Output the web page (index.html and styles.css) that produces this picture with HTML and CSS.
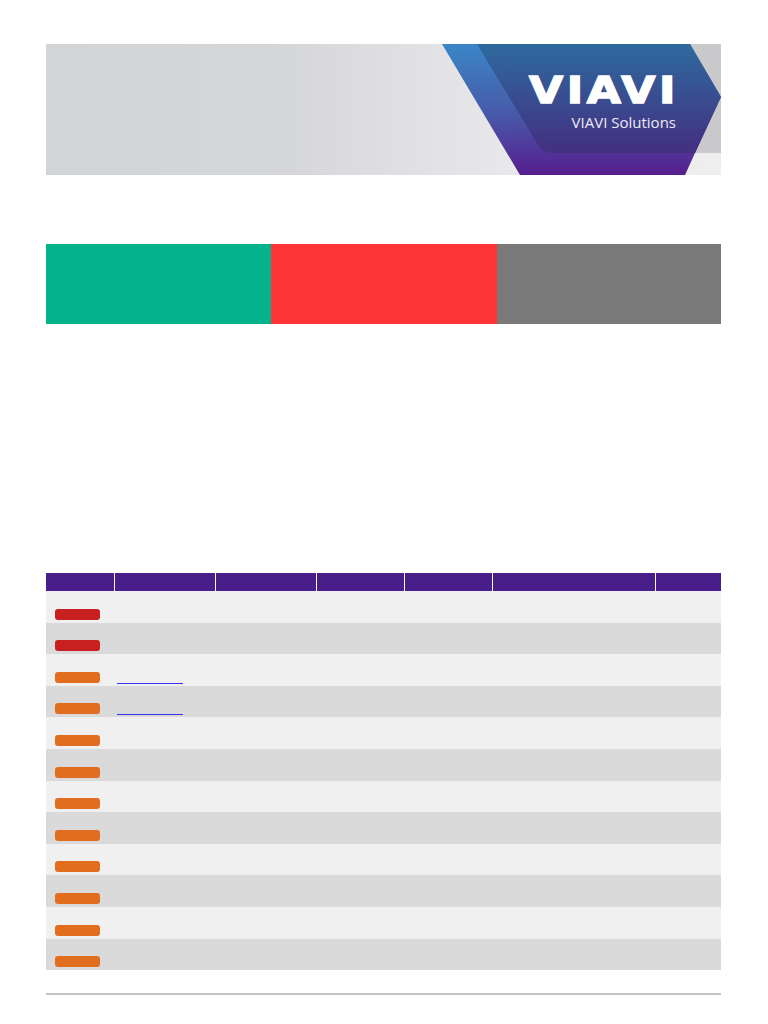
FILE: index.html
```html
<!DOCTYPE html>
<html lang="en">
<head>
<meta charset="utf-8">
<title>VIAVI Report</title>
<link rel="stylesheet" href="styles.css">
</head>
<body>
<div class="page">
  <header class="banner">
    <svg class="banner-art" viewBox="0 0 675 131" width="675" height="131" xmlns="http://www.w3.org/2000/svg">
      <defs>
        <linearGradient id="outerGrad" x1="0" y1="0" x2="0" y2="1">
          <stop offset="0" stop-color="#3a86c6"/>
          <stop offset="0.55" stop-color="#4858a8"/>
          <stop offset="1" stop-color="#561d8e"/>
        </linearGradient>
        <linearGradient id="innerGrad" x1="0" y1="0" x2="0" y2="1">
          <stop offset="0" stop-color="#2e6a9e"/>
          <stop offset="1" stop-color="#432f80"/>
        </linearGradient>
      </defs>
      <rect x="640" y="0" width="35" height="109" fill="#c9c9cb"/>
      <polygon points="396,0 644,0 675,53 649,109 639,131 474,131" fill="url(#outerGrad)"/>
      <path d="M431,0 H644 L675,53 L649,109 H507 Q497,109 492,101 Z" fill="url(#innerGrad)"/>
      <text class="logo-word" x="483" y="59" textLength="150" lengthAdjust="spacingAndGlyphs">VIAVI</text>
      <text class="logo-sub" x="630" y="84" text-anchor="end">VIAVI Solutions</text>
    </svg>
  </header>

  <div class="status-bar">
    <div class="seg seg-pass"></div>
    <div class="seg seg-fail"></div>
    <div class="seg seg-other"></div>
  </div>

  <div class="results">
    <div class="row head">
      <div class="cell c1"></div>
      <div class="cell c2"></div>
      <div class="cell c3"></div>
      <div class="cell c4"></div>
      <div class="cell c5"></div>
      <div class="cell c6"></div>
      <div class="cell c7"></div>
    </div>
    <div class="row odd"><div class="cell c1"><span class="badge red"></span></div><div class="cell c2"></div></div>
    <div class="row even"><div class="cell c1"><span class="badge red"></span></div><div class="cell c2"></div></div>
    <div class="row odd"><div class="cell c1"><span class="badge orange"></span></div><div class="cell c2"><a class="link" href="#"></a></div></div>
    <div class="row even"><div class="cell c1"><span class="badge orange"></span></div><div class="cell c2"><a class="link" href="#"></a></div></div>
    <div class="row odd"><div class="cell c1"><span class="badge orange"></span></div><div class="cell c2"></div></div>
    <div class="row even"><div class="cell c1"><span class="badge orange"></span></div><div class="cell c2"></div></div>
    <div class="row odd"><div class="cell c1"><span class="badge orange"></span></div><div class="cell c2"></div></div>
    <div class="row even"><div class="cell c1"><span class="badge orange"></span></div><div class="cell c2"></div></div>
    <div class="row odd"><div class="cell c1"><span class="badge orange"></span></div><div class="cell c2"></div></div>
    <div class="row even"><div class="cell c1"><span class="badge orange"></span></div><div class="cell c2"></div></div>
    <div class="row odd"><div class="cell c1"><span class="badge orange"></span></div><div class="cell c2"></div></div>
    <div class="row even"><div class="cell c1"><span class="badge orange"></span></div><div class="cell c2"></div></div>
  </div>

  <footer class="footer-line"></footer>
</div>
</body>
</html>
```

FILE: styles.css
```css
* {
  box-sizing: border-box;
}

html, body {
  margin: 0;
  padding: 0;
  background: #ffffff;
  font-family: "Liberation Sans", Arial, sans-serif;
}

.page {
  width: 675px;
  margin-left: 46px;
  padding-top: 44px;
}

.banner {
  height: 131px;
  background: linear-gradient(to right, #d3d4d6 0%, #d5d6d8 35%, #e9e9eb 70%, #eeeeef 100%);
}

.banner-art {
  display: block;
}

.logo-word {
  font-family: "DejaVu Sans", sans-serif;
  font-weight: bold;
  font-size: 37px;
  letter-spacing: 3px;
  fill: #ffffff;
  stroke: #ffffff;
  stroke-width: 1.4px;
}

.logo-sub {
  font-family: "Open Sans", "Noto Sans", sans-serif;
  font-size: 15px;
  fill: #eceaf4;
}

.status-bar {
  display: flex;
  height: 80px;
  margin-top: 69px;
}

.seg {
  height: 100%;
}

.seg-pass {
  width: 225px;
  background: #04b28c;
}

.seg-fail {
  width: 226px;
  background: #fe3537;
}

.seg-other {
  width: 224px;
  background: #797979;
}

.results {
  margin-top: 249px;
}

.row {
  display: flex;
  height: 31.6px;
}

.row.head {
  height: 18px;
  gap: 1px;
  background: #ffffff;
}

.row.head .cell {
  background: #4a1e8a;
}

.row.odd {
  background: #f0f0f0;
}

.row.even {
  background: #dadada;
}

.cell {
  height: 100%;
}

.c1 { width: 68px; }
.c2 { width: 100px; }
.c3 { width: 100px; }
.c4 { width: 87px; }
.c5 { width: 87px; }
.c6 { width: 162px; }
.c7 { width: 65px; }

.row.odd .c1,
.row.even .c1 {
  display: flex;
  align-items: flex-end;
  padding-left: 9px;
  padding-bottom: 3px;
}

.badge {
  display: block;
  width: 45px;
  height: 11px;
  border-radius: 3px;
}

.badge.red {
  background: #c82020;
}

.badge.orange {
  background: #e16d1e;
}

.row.odd .c2,
.row.even .c2 {
  display: flex;
  align-items: flex-end;
  padding-left: 3px;
  padding-bottom: 2px;
}

.link {
  display: block;
  width: 66px;
  height: 1px;
  background: #3535ee;
}

.footer-line {
  margin-top: 23px;
  height: 2px;
  background: #c2c2c2;
}
```
